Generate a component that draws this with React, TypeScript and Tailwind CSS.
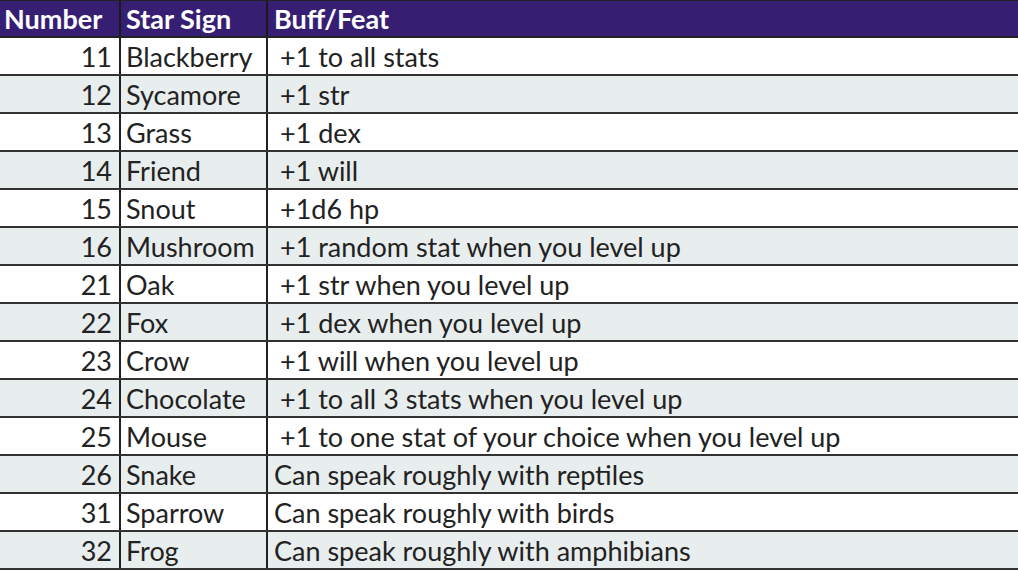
import React from "react";

const rows: [string, string, string, boolean][] = [
  ["11", "Blackberry", "+1 to all stats", true],
  ["12", "Sycamore", "+1 str", true],
  ["13", "Grass", "+1 dex", true],
  ["14", "Friend", "+1 will", true],
  ["15", "Snout", "+1d6 hp", true],
  ["16", "Mushroom", "+1 random stat when you level up", true],
  ["21", "Oak", "+1 str when you level up", true],
  ["22", "Fox", "+1 dex when you level up", true],
  ["23", "Crow", "+1 will when you level up", true],
  ["24", "Chocolate", "+1 to all 3 stats when you level up", true],
  ["25", "Mouse", "+1 to one stat of your choice when you level up", true],
  ["26", "Snake", "Can speak roughly with reptiles", false],
  ["31", "Sparrow", "Can speak roughly with birds", false],
  ["32", "Frog", "Can speak roughly with amphibians", false],
];

export default function App() {
  return (
    <div
      className="w-[1018px] h-[572px] overflow-hidden bg-white text-[#222]"
      style={{ fontFamily: "Lato, 'Open Sans', sans-serif" }}
    >
      <div className="flex h-[38px] bg-[#361f73] text-white font-bold text-[27px] border-t border-b-2 border-[#222]">
        <div className="w-[121px] border-r-2 border-[#1a1a1a] pl-[4px] flex items-center leading-none">
          Number
        </div>
        <div className="w-[147px] border-r-2 border-[#1a1a1a] pl-[5px] flex items-center leading-none">
          Star Sign
        </div>
        <div className="flex-1 pl-[6px] flex items-center leading-none">Buff/Feat</div>
      </div>
      {rows.map(([n, s, b, lead], i) => (
        <div
          key={n}
          className={`flex h-[38px] border-b-2 border-[#333] text-[27px] ${
            i % 2 === 0 ? "bg-white" : "bg-[#e8eded]"
          }`}
        >
          <div className="w-[121px] border-r-2 border-[#222] pr-[7px] flex items-center justify-end leading-none">
            {n}
          </div>
          <div className="w-[147px] border-r-2 border-[#222] pl-[5px] flex items-center leading-none">
            {s}
          </div>
          <div
            className={`flex-1 flex items-center leading-none ${
              lead ? "pl-[12px]" : "pl-[6px]"
            }`}
          >
            {b}
          </div>
        </div>
      ))}
    </div>
  );
}
